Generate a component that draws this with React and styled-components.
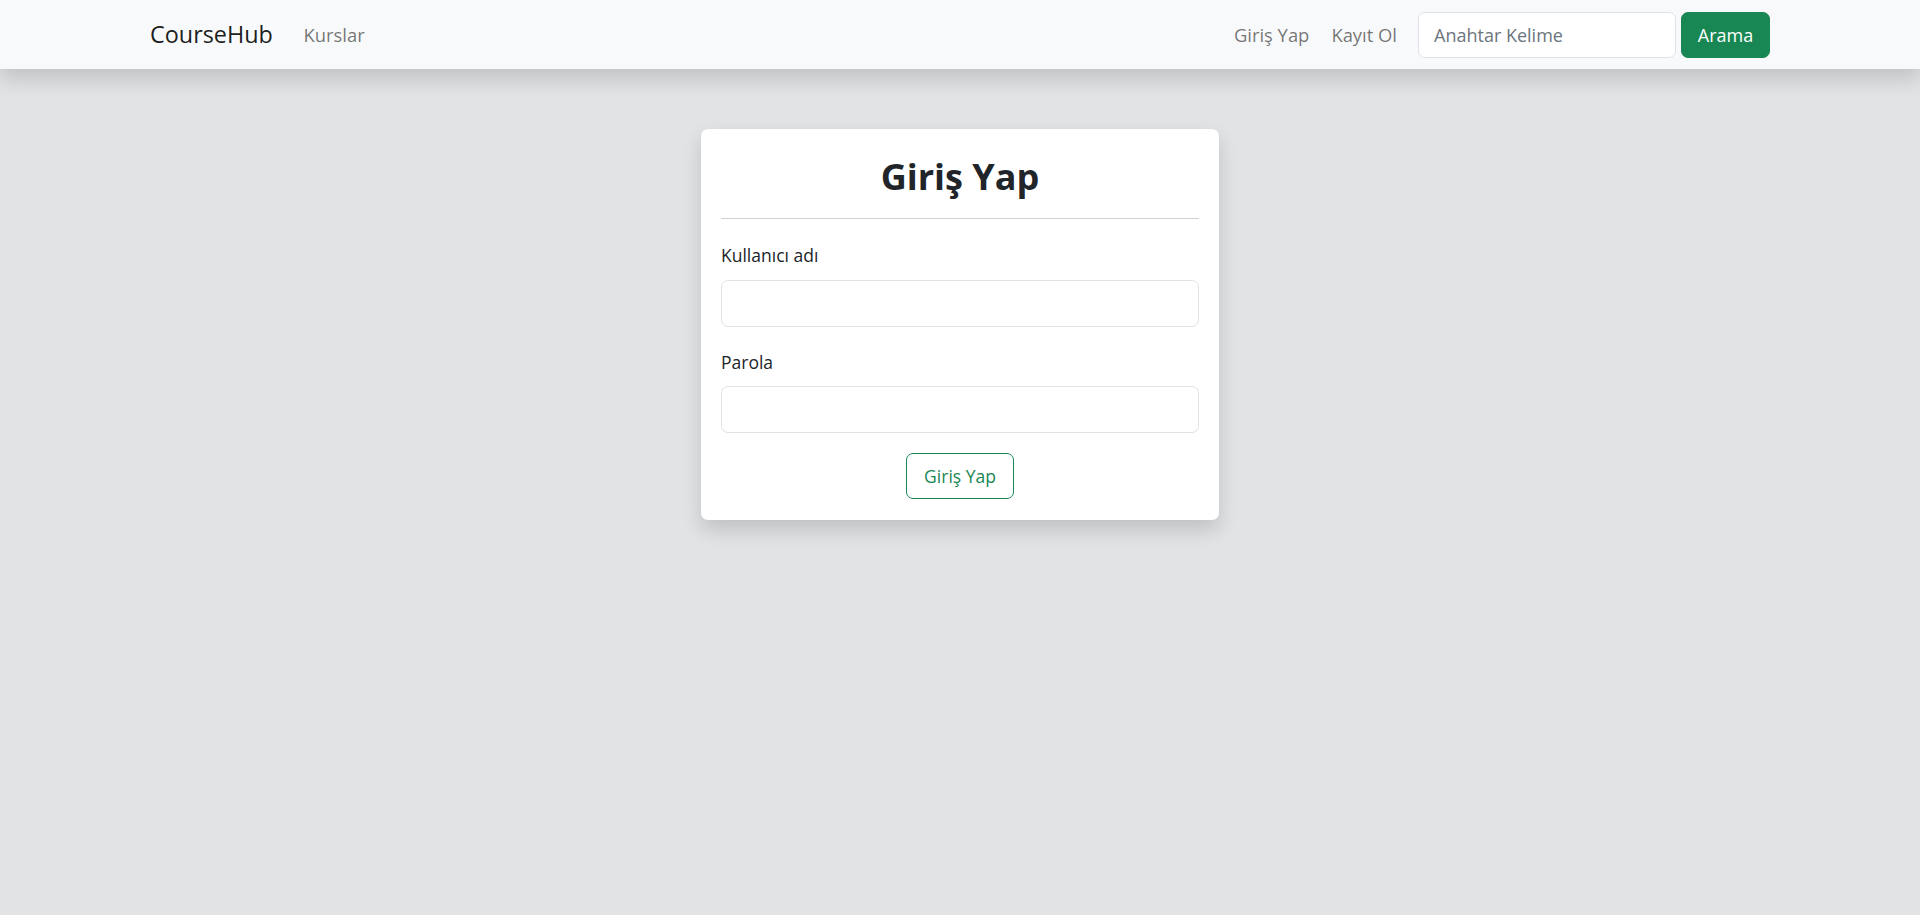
import styled, { createGlobalStyle } from "styled-components";

const GlobalStyle = createGlobalStyle`
  html, body {
    margin: 0;
    padding: 0;
  }
  body {
    background: #e2e3e5;
    font-family: "Open Sans", "Noto Sans", sans-serif;
    color: #212529;
    min-height: 915px;
  }
  * {
    box-sizing: border-box;
  }
`;

const Navbar = styled.nav`
  height: 69px;
  padding: 0 150px;
  background: #f8f9fa;
  display: flex;
  align-items: center;
  justify-content: space-between;
  box-shadow: 0 9.6px 19.2px rgba(0, 0, 0, 0.15);
  position: relative;
  z-index: 2;
`;

const NavGroup = styled.div`
  display: flex;
  align-items: center;
`;

const Brand = styled.a`
  font-size: 23.4px;
  color: rgba(0, 0, 0, 0.9);
  margin-right: 21px;
  text-decoration: none;
  line-height: 1.5;
`;

const NavLink = styled.a`
  font-size: 18.4px;
  color: rgba(0, 0, 0, 0.55);
  padding: 0 ${(p) => (p.$wide ? "11px" : "9.6px")};
  text-decoration: none;
  line-height: 1.5;
`;

const SearchForm = styled.form`
  display: flex;
  align-items: center;
  gap: 5px;
  margin-left: 10px;
`;

const SearchInput = styled.input`
  width: 258px;
  height: 46px;
  padding: 0 15px;
  font-family: inherit;
  font-size: 18px;
  color: #212529;
  background: #fff;
  border: 1px solid #dee2e6;
  border-radius: 7px;
  outline: none;
  &::placeholder {
    color: #6c757d;
  }
`;

const SearchButton = styled.button`
  width: 89px;
  height: 46px;
  font-family: inherit;
  font-size: 18px;
  font-weight: 500;
  color: #fff;
  background: #198754;
  border: 1px solid #198754;
  border-radius: 7px;
  padding: 0;
`;

const Main = styled.main`
  display: flex;
  justify-content: center;
  padding-top: 60px;
`;

const Card = styled.div`
  width: 518px;
  background: #fff;
  border-radius: 7px;
  padding: 19px 20px 21px;
  box-shadow: 0 9.6px 19.2px rgba(0, 0, 0, 0.15);
`;

const Title = styled.h2`
  margin: 6px 0 0;
  text-align: center;
  font-size: 36px;
  font-weight: 700;
  line-height: 46px;
  color: #212529;
`;

const Divider = styled.hr`
  margin: 18px 0 0;
  border: 0;
  border-top: 1px solid #cfd0d2;
`;

const Field = styled.div`
  margin-top: ${(p) => (p.$first ? "22px" : "21px")};
`;

const Label = styled.label`
  display: block;
  font-size: 17.5px;
  line-height: 29px;
  margin-bottom: 9.6px;
  color: #212529;
`;

const TextInput = styled.input`
  display: block;
  width: 100%;
  height: 47px;
  padding: 0 14px;
  font-family: inherit;
  font-size: 18px;
  border: 1px solid #dee2e6;
  border-radius: 7px;
  outline: none;
`;

const Actions = styled.div`
  display: flex;
  justify-content: center;
  margin-top: 20px;
`;

const OutlineButton = styled.button`
  width: 108px;
  height: 46px;
  padding: 0;
  font-family: inherit;
  font-size: 17.5px;
  color: #198754;
  background: #fff;
  border: 1px solid #198754;
  border-radius: 7px;
`;

export default function App() {
  return (
    <>
      <GlobalStyle />
      <Navbar>
        <NavGroup>
          <Brand href="#">CourseHub</Brand>
          <NavLink href="#">Kurslar</NavLink>
        </NavGroup>
        <NavGroup>
          <NavLink href="#" $wide>Giriş Yap</NavLink>
          <NavLink href="#" $wide>Kayıt Ol</NavLink>
          <SearchForm onSubmit={(e) => e.preventDefault()}>
            <SearchInput placeholder="Anahtar Kelime" />
            <SearchButton type="submit">Arama</SearchButton>
          </SearchForm>
        </NavGroup>
      </Navbar>
      <Main>
        <Card>
          <Title>Giriş Yap</Title>
          <Divider />
          <Field $first>
            <Label>Kullanıcı adı</Label>
            <TextInput type="text" />
          </Field>
          <Field>
            <Label>Parola</Label>
            <TextInput type="password" />
          </Field>
          <Actions>
            <OutlineButton type="submit">Giriş Yap</OutlineButton>
          </Actions>
        </Card>
      </Main>
    </>
  );
}
